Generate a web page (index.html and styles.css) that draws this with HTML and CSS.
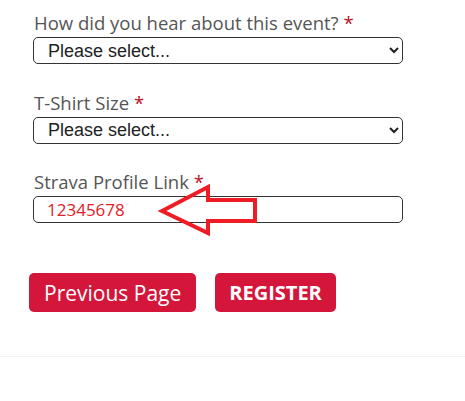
FILE: index.html
```html
<!DOCTYPE html>
<html lang="en">
<head>
    <meta charset="UTF-8">
    <meta name="viewport" content="width=device-width, initial-scale=1.0">
    <title>Registration</title>
    <link rel="stylesheet" href="styles.css">
</head>
<body>
    <form class="reg-form">
        <div class="field">
            <label for="heard">How did you hear about this event? <span class="req">*</span></label>
            <select id="heard">
                <option>Please select...</option>
            </select>
        </div>

        <div class="field">
            <label for="shirt">T-Shirt Size <span class="req">*</span></label>
            <select id="shirt">
                <option>Please select...</option>
            </select>
        </div>

        <div class="field field-strava">
            <label for="strava">Strava Profile Link <span class="req">*</span></label>
            <input type="text" id="strava" value="12345678">
            <svg class="arrow" width="104" height="56" viewBox="0 0 104 56">
                <polygon points="4,28 50,4 50,17 97,17 97,38 50,38 50,50" fill="none" stroke="#ee1c25" stroke-width="4" stroke-linejoin="miter"/>
            </svg>
        </div>

        <div class="buttons">
            <button type="button" class="btn">Previous Page</button>
            <button type="button" class="btn btn-bold">REGISTER</button>
        </div>
    </form>
    <div class="footer-line"></div>
</body>
</html>
```

FILE: styles.css
```css
body {
    margin: 0;
    background: #FFFFFF;
    font-family: 'Open Sans', sans-serif;
}

.reg-form {
    padding: 8px 62px 0 33px;
}

.field {
    margin-bottom: 23.5px;
}

.field-strava {
    position: relative;
}

label {
    display: block;
    font-size: 18.5px;
    line-height: 29px;
    color: #555555;
    padding-left: 1px;
}

.req {
    color: #b8121f;
}

select, input {
    display: block;
    width: 370px;
    height: 27px;
    box-sizing: border-box;
    border: 1px solid #333333;
    border-radius: 5px;
    background: #FFFFFF;
    padding: 0 0 0 10px;
    margin: 0;
}

select {
    font-family: 'Liberation Sans', Arial, sans-serif;
    font-size: 18px;
    color: #222222;
}

input {
    font-family: 'Open Sans', sans-serif;
    font-size: 17px;
    color: #e42025;
    padding-left: 13px;
}

.arrow {
    position: absolute;
    left: 125px;
    top: 16px;
}

.buttons {
    display: flex;
    gap: 19px;
    margin-left: -4px;
    padding-top: 26.5px;
}

.btn {
    height: 39px;
    padding: 0 15px;
    border: none;
    border-radius: 5px;
    background: #d4163a;
    color: #FFFFFF;
    font-family: 'Open Sans', sans-serif;
    font-size: 21px;
}

.btn-bold {
    font-weight: bold;
    font-size: 20px;
    padding: 0 14px;
}

.footer-line {
    margin-top: 44px;
    border-top: 1px solid #f2f2f2;
}
```
